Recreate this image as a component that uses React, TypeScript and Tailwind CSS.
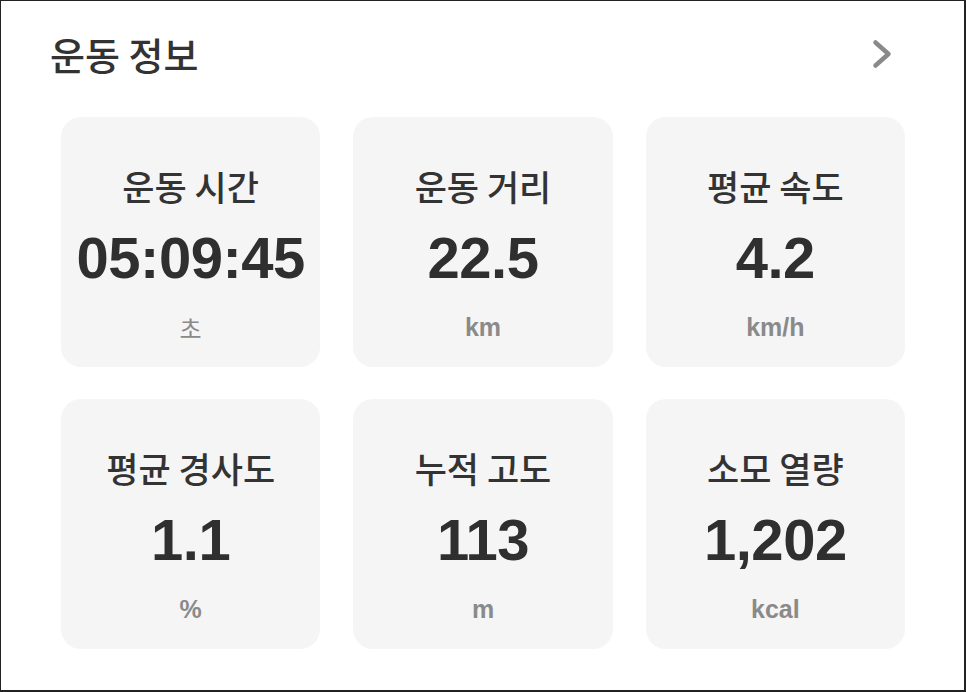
const stats = [
  { label: "운동 시간", value: "05:09:45", unit: "초" },
  { label: "운동 거리", value: "22.5", unit: "km" },
  { label: "평균 속도", value: "4.2", unit: "km/h" },
  { label: "평균 경사도", value: "1.1", unit: "%" },
  { label: "누적 고도", value: "113", unit: "m" },
  { label: "소모 열량", value: "1,202", unit: "kcal" },
];

const kr = { fontFamily: '"Noto Sans CJK KR", "Noto Sans", sans-serif' };
const num = { fontFamily: '"Liberation Sans", "Noto Sans CJK KR", sans-serif' };

function StatCard({ label, value, unit }: { label: string; value: string; unit: string }) {
  const hangulUnit = /[가-힣]/.test(unit);
  return (
    <div className="h-[250px] rounded-[20px] bg-[#f5f5f5] flex flex-col items-center pt-[51px]">
      <div style={kr} className="text-[35px] leading-[35px] font-medium text-[#333333]">
        {label}
      </div>
      <div style={num} className="mt-[25px] text-[58px] leading-[60px] font-bold text-[#2f2f2f] tracking-[-0.5px]">
        {value}
      </div>
      <div
        style={hangulUnit ? kr : num}
        className={
          hangulUnit
            ? "mt-[27px] text-[24px] leading-[25px] font-normal text-[#8a8a8a]"
            : "mt-[27px] text-[25px] leading-[25px] font-bold text-[#8a8a8a]"
        }
      >
        {unit}
      </div>
    </div>
  );
}

export default function App() {
  return (
    <div className="w-[966px] h-[692px] bg-white border-t border-l border-r-2 border-b-2 border-[#222222] flex flex-col">
      <div className="flex items-center justify-between pl-[49px] pr-[72px] pt-[35px] h-[71px]">
        <h2 style={kr} className="text-[38px] leading-[38px] font-medium text-[#333333]">
          운동 정보
        </h2>
        <svg width="20" height="30" viewBox="0 0 20 30" fill="none">
          <path d="M3.5 3.5 L16.5 15 L3.5 26.5" stroke="#8a8a8a" strokeWidth="4.5" strokeLinecap="round" strokeLinejoin="round" />
        </svg>
      </div>
      <div className="grid grid-cols-3 gap-x-[33px] gap-y-[32px] pl-[60px] pr-[59px] mt-[45px]">
        {stats.map((s) => (
          <StatCard key={s.label} {...s} />
        ))}
      </div>
    </div>
  );
}
